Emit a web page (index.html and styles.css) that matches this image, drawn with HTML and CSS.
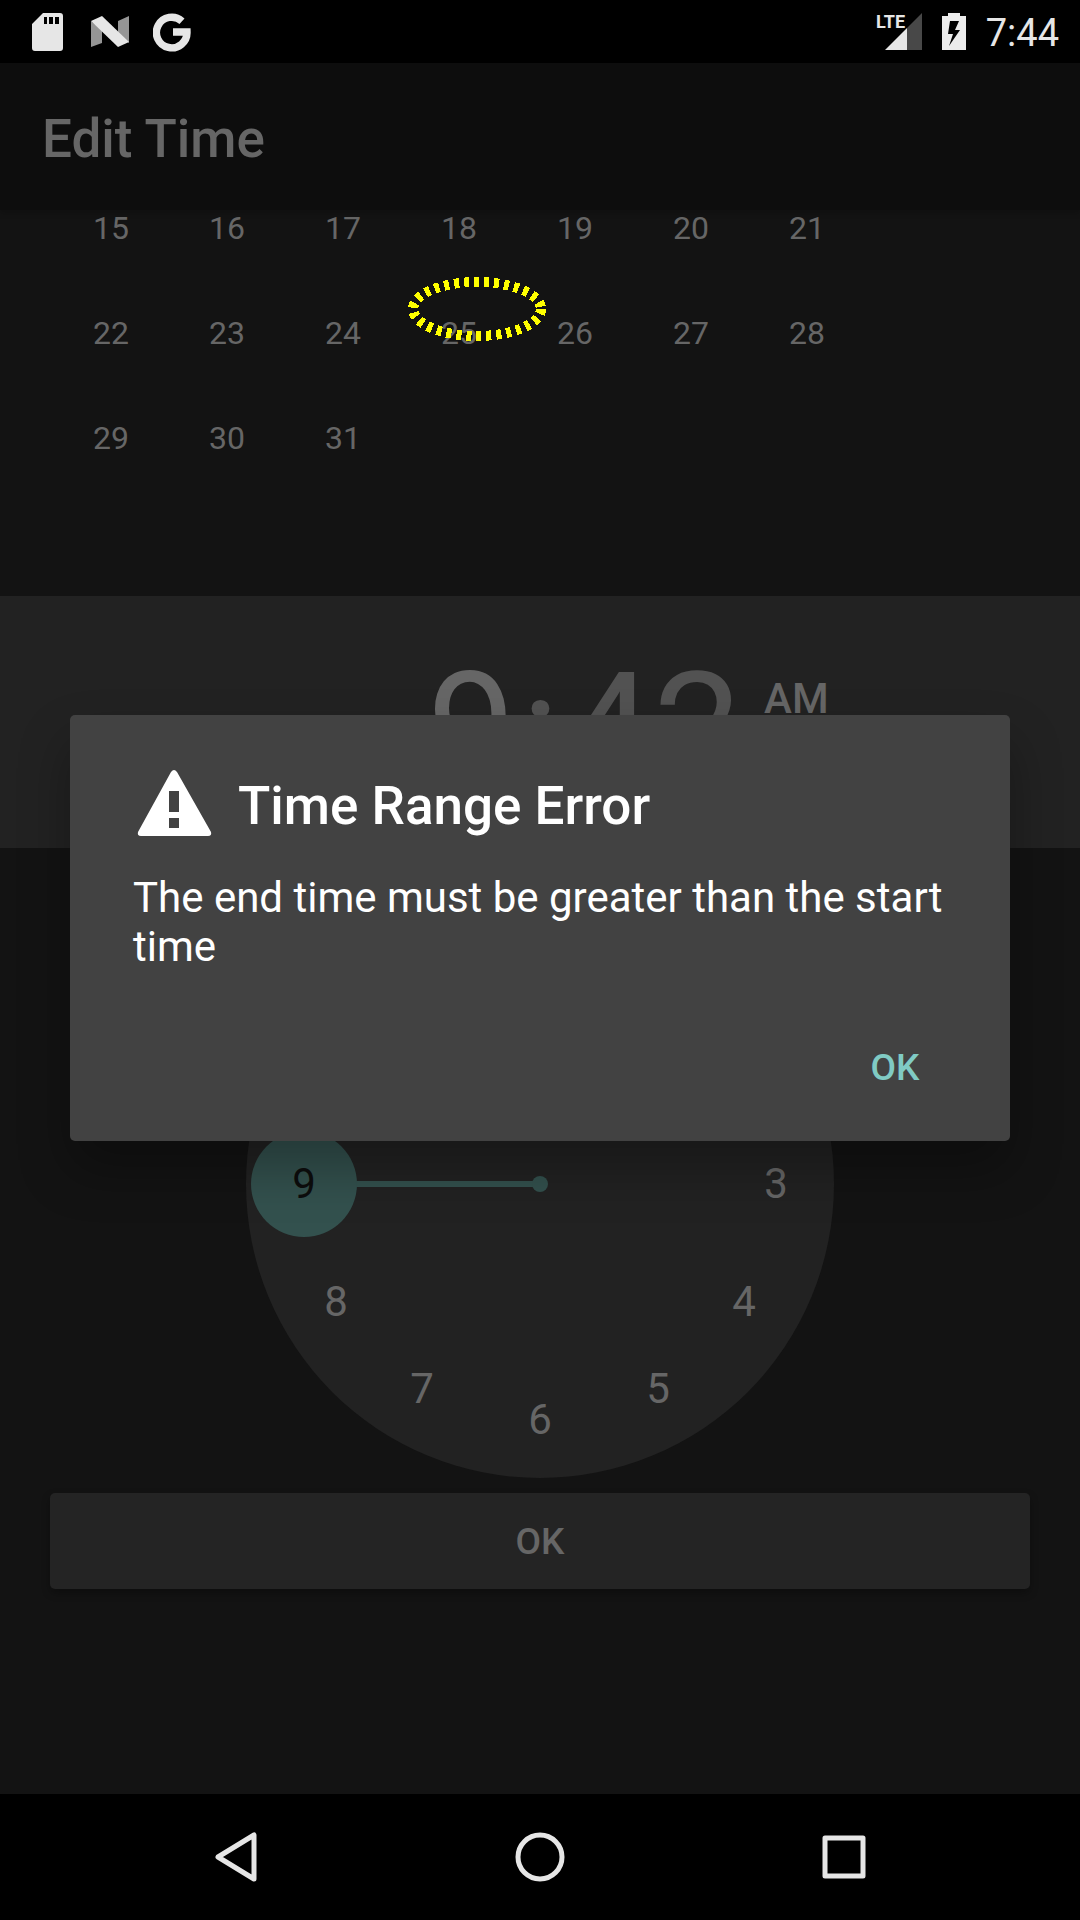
FILE: index.html
```
<!DOCTYPE html>
<html lang="en">
<head>
<meta charset="utf-8">
<meta name="viewport" content="width=device-width, initial-scale=1">
<title>Edit Time</title>
<link rel="stylesheet" href="styles.css">
</head>
<body class="screen">
  <header class="status-bar">
    <div class="status-group status-notifications">
      <svg class="status-icon" viewBox="0 0 38 40" aria-hidden="true">
        <path fill="#e6e6e6" fill-rule="evenodd" d="M14 1H31Q34 1 34 4V36Q34 39 31 39H6Q3 39 3 36V12ZM15 5V12H18V5ZM20 5V12H24V5ZM26 5V12H30V5Z"/>
      </svg>
      <svg class="status-icon" viewBox="0 0 38 40" aria-hidden="true">
        <path fill="#959595" d="M0 9L11 18V31L0 35ZM27 9L38 4V31L27 22Z"/>
        <path fill="#e6e6e6" d="M0 9L11 4L38 30L27 35Z"/>
      </svg>
      <svg class="status-icon" viewBox="0 0 38 40" aria-hidden="true">
        <path fill="none" stroke="#e6e6e6" stroke-width="7.4" d="M29 9.200A15.300 15.300 0 1 0 34 20H20"/>
      </svg>
    </div>
    <div class="status-group status-system">
      <svg class="signal-icon" viewBox="0 0 46 40" aria-hidden="true">
        <path fill="#484848" d="M46 1V38H31V16Z"/>
        <path fill="#e6e6e6" d="M31 16V38H9Z"/>
        <text class="signal-label" x="0" y="16">LTE</text>
      </svg>
      <svg class="battery-icon" viewBox="0 0 24 40" aria-hidden="true">
        <path fill="#ececec" fill-rule="evenodd" d="M6 1H18V4H24V38H0V4H6ZM8 9L6 22H11L7 34L18 18H13L17 9Z"/>
      </svg>
      <time class="status-time">7:44</time>
    </div>
  </header>

  <div class="app">
    <div class="app-bar"><h1 class="app-title">Edit Time</h1></div>

    <main class="content">
      <table class="calendar">
        <tbody>
          <tr><td>15</td><td>16</td><td>17</td><td>18</td><td>19</td><td>20</td><td>21</td></tr>
          <tr><td>22</td><td>23</td><td>24</td><td>25</td><td>26</td><td>27</td><td>28</td></tr>
          <tr><td>29</td><td>30</td><td>31</td><td></td><td></td><td></td><td></td></tr>
          <tr><td></td><td></td><td></td><td></td><td></td><td></td><td></td></tr>
        </tbody>
      </table>
      <svg class="day-marker" viewBox="0 0 140 66" aria-hidden="true">
        <ellipse cx="70" cy="33" rx="64" ry="27" fill="none" stroke="#ff0" stroke-width="10" stroke-dasharray="5 5" shape-rendering="crispEdges"/>
      </svg>

      <section class="time-header">
        <button class="time-digit time-active" type="button">9</button>
        <span class="time-digit time-colon">:</span>
        <button class="time-digit" type="button">42</button>
        <div class="meridiem">
          <button class="meridiem-option time-active" type="button">AM</button>
          <button class="meridiem-option" type="button">PM</button>
        </div>
      </section>

      <svg class="clock" viewBox="0 0 588 588" role="img" aria-label="Hour picker, 9 selected">
        <circle cx="294" cy="294" r="294" fill="#222"/>
        <path stroke="#33514e" stroke-width="6" d="M58 294H294"/>
        <circle cx="294" cy="294" r="8" fill="#33514e"/>
        <circle cx="58" cy="294" r="53" fill="#33514e"/>
        <g class="clock-number">
          <text x="530" y="308">3</text>
          <text x="498" y="426">4</text>
          <text x="412" y="513">5</text>
          <text x="294" y="544">6</text>
          <text x="176" y="513">7</text>
          <text x="90" y="426">8</text>
          <text class="clock-selected" x="58" y="308">9</text>
        </g>
      </svg>

      <button class="confirm" type="button">OK</button>
    </main>

    <div class="overlay">
      <section class="dialog" role="alertdialog" aria-labelledby="dialog-title" aria-describedby="dialog-message">
        <div class="dialog-heading">
          <svg class="dialog-icon" viewBox="0 0 84 84" aria-hidden="true">
            <path fill="#fff" fill-rule="evenodd" d="M38 11Q41 7 44 11L78 71Q79 75 75 75H8Q4 75 5 71ZM36 30V51H46V30ZM36 57V67H46V57Z"/>
          </svg>
          <h2 class="dialog-title" id="dialog-title">Time Range Error</h2>
        </div>
        <p class="dialog-message" id="dialog-message">The end time must be greater than the start time</p>
        <div class="dialog-actions"><button class="dialog-button" type="button">OK</button></div>
      </section>
    </div>
  </div>

  <nav class="nav-bar">
    <button class="nav-button" type="button" aria-label="Back">
      <svg class="nav-icon" viewBox="0 0 54 54"><path d="M9 27L45 5V49Z"/></svg>
    </button>
    <button class="nav-button" type="button" aria-label="Home">
      <svg class="nav-icon" viewBox="0 0 54 54"><circle cx="27" cy="27" r="22"/></svg>
    </button>
    <button class="nav-button" type="button" aria-label="Overview">
      <svg class="nav-icon" viewBox="0 0 54 54"><rect x="8" y="8" width="38" height="38"/></svg>
    </button>
  </nav>
</body>
</html>
```

FILE: styles.css
```
*,
*::before,
*::after {
  box-sizing: border-box;
}

.screen {
  display: flex;
  flex-direction: column;
  min-height: 100vh;
  margin: 0;
  background: #131313;
  color: #666;
  font-family: Roboto, "Noto Sans", sans-serif;
}

button {
  margin: 0;
  padding: 0;
  border: 0;
  background: none;
  color: inherit;
  font: inherit;
}

/* Status bar */
.status-bar {
  display: flex;
  align-items: center;
  justify-content: space-between;
  height: 63px;
  padding: 0 21px 0 29px;
  background: #000;
}

.status-group {
  display: flex;
  align-items: center;
}

.status-notifications {
  gap: 24px;
}

.status-system {
  gap: 20px;
}

.status-icon {
  width: 38px;
  height: 40px;
}

.signal-icon {
  width: 46px;
  height: 40px;
}

.signal-label {
  fill: #e6e6e6;
  font-family: "Liberation Sans Narrow", Roboto, sans-serif;
  font-size: 18px;
  font-weight: 700;
}

.battery-icon {
  width: 24px;
  height: 40px;
}

.status-time {
  padding-top: 3px;
  color: #e6e6e6;
  font-size: 38px;
  line-height: 44px;
}

/* App area */
.app {
  position: relative;
  display: flex;
  flex: 1;
  flex-direction: column;
}

.app-bar {
  position: relative;
  z-index: 1;
  display: flex;
  align-items: center;
  height: 147px;
  padding: 4px 42px 0;
  background: #0d0d0d;
  box-shadow: 0 3px 6px rgba(0, 0, 0, 0.2);
}

.app-title {
  margin: 0;
  font-size: 53px;
  font-weight: 500;
  line-height: 60px;
}

.content {
  position: relative;
  display: flex;
  flex: 1;
  flex-direction: column;
  overflow: hidden;
}

/* The list is scrolled part of the way into its first row */
.calendar {
  width: 812px;
  margin: -35px 0 1px 53px;
  border-collapse: collapse;
  table-layout: fixed;
  font-size: 32px;
  line-height: 38px;
}

.calendar td {
  height: 105px;
  padding: 0;
  text-align: center;
  vertical-align: middle;
}

.day-marker {
  position: absolute;
  top: 66px;
  left: 407px;
  width: 140px;
  height: 66px;
}

.time-header {
  display: flex;
  align-items: center;
  justify-content: center;
  height: 252px;
  padding: 16px 0 0 176px;
  background: #222;
}

.time-digit {
  color: #525252;
  font-size: 158px;
  line-height: 184px;
}

.time-colon {
  margin: 0 5px;
}

.meridiem {
  display: flex;
  flex-direction: column;
  gap: 12px;
  margin-left: 22px;
}

.meridiem-option {
  color: #525252;
  font-size: 42px;
  font-weight: 500;
  line-height: 50px;
}

.time-active {
  color: #666;
}

.clock {
  align-self: center;
  width: 588px;
  height: 588px;
  margin-top: 42px;
}

.clock-number {
  fill: #666;
  font-size: 42px;
  text-anchor: middle;
}

.clock-selected {
  fill: #0d0d0d;
}

.confirm {
  height: 96px;
  margin: 15px 50px;
  padding-top: 2px;
  border-radius: 5px;
  background: #242424;
  box-shadow: 0 4px 8px rgba(0, 0, 0, 0.3);
  font-size: 37px;
  font-weight: 500;
  line-height: 44px;
}

/* Alert dialog */
.overlay {
  position: absolute;
  inset: 0;
  z-index: 2;
  display: flex;
  align-items: center;
  padding: 0 70px 2px;
}

.dialog {
  flex: 1;
  padding: 46px 31px 26px 63px;
  border-radius: 5px;
  background: #424242;
  box-shadow: 0 28px 52px rgba(0, 0, 0, 0.3);
  color: #fff;
}

.dialog-heading {
  display: flex;
  align-items: center;
  gap: 21px;
}

.dialog-icon {
  width: 84px;
  height: 84px;
}

.dialog-title {
  margin: 0;
  padding-top: 6px;
  font-size: 53px;
  font-weight: 500;
  line-height: 60px;
}

.dialog-message {
  margin: 28px 32px 50px 0;
  font-size: 42px;
  line-height: 49px;
}

.dialog-actions {
  display: flex;
  justify-content: flex-end;
}

.dialog-button {
  min-width: 168px;
  height: 94px;
  color: #80cbc4;
  font-size: 37px;
  font-weight: 500;
  line-height: 44px;
}

/* Navigation bar */
.nav-bar {
  display: flex;
  height: 126px;
  padding: 0 84px;
  background: #000;
}

.nav-button {
  display: flex;
  flex: 1;
  align-items: center;
  justify-content: center;
}

.nav-icon {
  width: 54px;
  height: 54px;
  fill: none;
  stroke: #e6e6e6;
  stroke-width: 5;
  stroke-linejoin: round;
}
```
